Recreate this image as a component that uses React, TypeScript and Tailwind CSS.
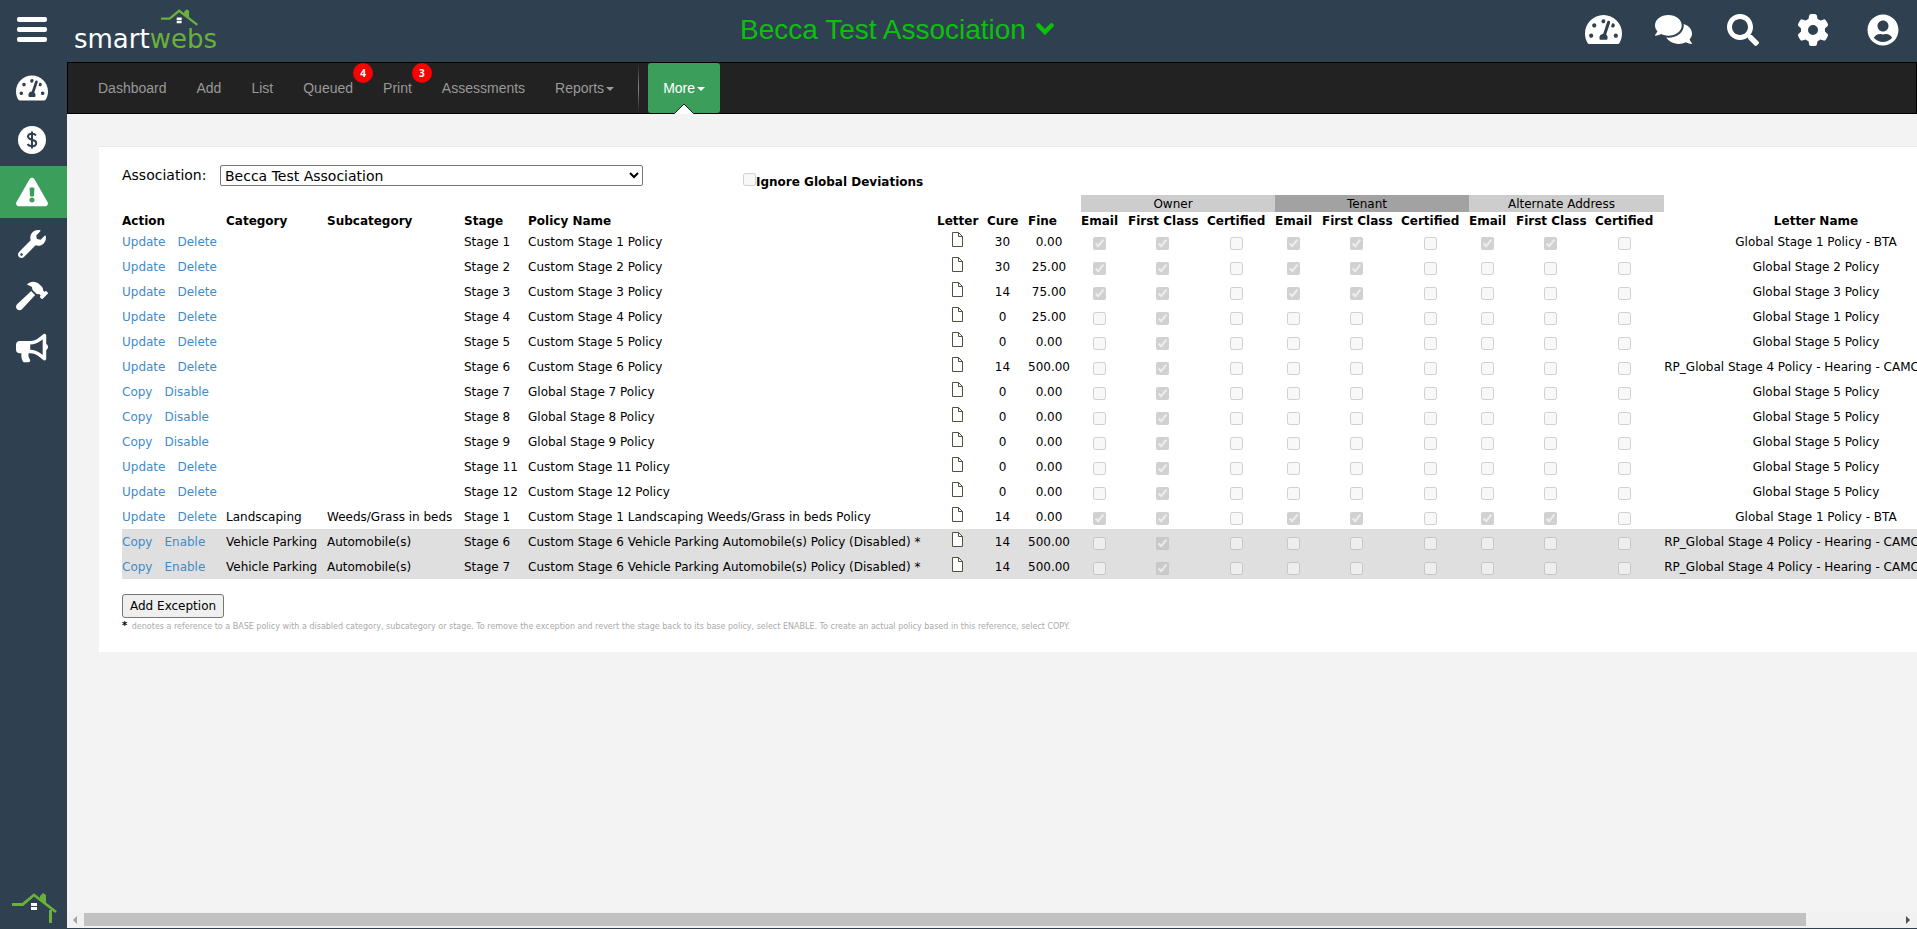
import { ReactNode } from "react"
import {
  FaBullhorn,
  FaComments,
  FaExclamationTriangle,
  FaHammer,
  FaSearch,
  FaTachometerAlt,
  FaUserCircle,
  FaWrench,
} from "react-icons/fa"
import { FaGear } from "react-icons/fa6"

type Policy = {
  category?: string
  subcategory?: string
  stage: number
  name: string
  cure: number
  fine: string
  // Email, First Class, Certified for owner, tenant and alternate address
  sends: string
  letter: string
  source: "custom" | "global" | "disabled"
}

const HEARING = "RP_Global Stage 4 Policy - Hearing - CAMCO Letter"

const policies: Policy[] = [
  { stage: 1, name: "Custom Stage 1 Policy", cure: 30, fine: "0.00", sends: "110110110", letter: "Global Stage 1 Policy - BTA", source: "custom" },
  { stage: 2, name: "Custom Stage 2 Policy", cure: 30, fine: "25.00", sends: "110110000", letter: "Global Stage 2 Policy", source: "custom" },
  { stage: 3, name: "Custom Stage 3 Policy", cure: 14, fine: "75.00", sends: "110110000", letter: "Global Stage 3 Policy", source: "custom" },
  { stage: 4, name: "Custom Stage 4 Policy", cure: 0, fine: "25.00", sends: "010000000", letter: "Global Stage 1 Policy", source: "custom" },
  { stage: 5, name: "Custom Stage 5 Policy", cure: 0, fine: "0.00", sends: "010000000", letter: "Global Stage 5 Policy", source: "custom" },
  { stage: 6, name: "Custom Stage 6 Policy", cure: 14, fine: "500.00", sends: "010000000", letter: HEARING, source: "custom" },
  { stage: 7, name: "Global Stage 7 Policy", cure: 0, fine: "0.00", sends: "010000000", letter: "Global Stage 5 Policy", source: "global" },
  { stage: 8, name: "Global Stage 8 Policy", cure: 0, fine: "0.00", sends: "010000000", letter: "Global Stage 5 Policy", source: "global" },
  { stage: 9, name: "Global Stage 9 Policy", cure: 0, fine: "0.00", sends: "010000000", letter: "Global Stage 5 Policy", source: "global" },
  { stage: 11, name: "Custom Stage 11 Policy", cure: 0, fine: "0.00", sends: "010000000", letter: "Global Stage 5 Policy", source: "custom" },
  { stage: 12, name: "Custom Stage 12 Policy", cure: 0, fine: "0.00", sends: "010000000", letter: "Global Stage 5 Policy", source: "custom" },
  { category: "Landscaping", subcategory: "Weeds/Grass in beds", stage: 1, name: "Custom Stage 1 Landscaping Weeds/Grass in beds Policy", cure: 14, fine: "0.00", sends: "110110110", letter: "Global Stage 1 Policy - BTA", source: "custom" },
  { category: "Vehicle Parking", subcategory: "Automobile(s)", stage: 6, name: "Custom Stage 6 Vehicle Parking Automobile(s) Policy (Disabled) *", cure: 14, fine: "500.00", sends: "010000000", letter: HEARING, source: "disabled" },
  { category: "Vehicle Parking", subcategory: "Automobile(s)", stage: 7, name: "Custom Stage 6 Vehicle Parking Automobile(s) Policy (Disabled) *", cure: 14, fine: "500.00", sends: "010000000", letter: HEARING, source: "disabled" },
]

const actions = {
  custom: ["Update", "Delete"],
  global: ["Copy", "Disable"],
  disabled: ["Copy", "Enable"],
}

const groups = ["Owner", "Tenant", "Alternate Address"]
const methods = ["Email", "First Class", "Certified"]

function House({ className, post }: { className: string; post?: boolean }) {
  return (
    <svg viewBox="0 0 46 31" className={className} aria-hidden="true">
      <path d="M0 11.500h10.500L22 2l22 17" fill="none" stroke="#69b03c" strokeWidth="2.8" />
      <path d="M28 6V3l3-3 3 2v10z" fill="#69b03c" />
      {post && <path d="M37 17h3v13h-3z" fill="#69b03c" />}
      <path d="M19 10h6v3h-6zM19 14h6v3h-6z" fill="#fff" />
    </svg>
  )
}

function MenuBars() {
  return (
    <svg viewBox="0 0 30 25" className="h-[25px] w-[30px]" fill="#fff" aria-hidden="true">
      <rect width="30" height="5" rx="2" />
      <rect y="10" width="30" height="5" rx="2" />
      <rect y="20" width="30" height="5" rx="2" />
    </svg>
  )
}

function DollarCircle() {
  return (
    <svg viewBox="0 0 28 28" className="size-7" aria-hidden="true">
      <circle cx="14" cy="14" r="14" fill="#fff" />
      <path
        d="M18 9.500c-.8-1.200-2.200-1.800-4-1.800-2.300 0-4 1-4 2.900 0 4.300 8.200 2 8.200 6.300 0 2-1.800 3.200-4.200 3.200-2 0-3.600-.8-4.400-2.200M14 5.500v17"
        fill="none"
        stroke="#2f4050"
        strokeWidth="2"
      />
    </svg>
  )
}

function PageIcon() {
  return (
    <svg viewBox="0 0 11 15" className="h-[15px] w-[11px]" aria-hidden="true">
      <path d="M.5.500h6l4 4v10H.500z" fill="#fff" stroke="#55503f" />
      <path d="M6.500.500v4h4" fill="none" stroke="#55503f" />
    </svg>
  )
}

function Check({ checked, label }: { checked: boolean; label: string }) {
  return <input type="checkbox" disabled defaultChecked={checked} aria-label={label} className="block size-[13px]" />
}

function HeaderButton({ label, children }: { label: string; children: ReactNode }) {
  return (
    <button aria-label={label} className="flex w-[38px] justify-center">
      {children}
    </button>
  )
}

function SideLink({ label, active, children }: { label: string; active?: boolean; children: ReactNode }) {
  return (
    <a
      href="#"
      aria-label={label}
      className={active ? "flex h-[52px] items-center justify-center bg-[#3b9f5b] pr-[3px]" : "flex h-[52px] items-center justify-center pr-[3px]"}
    >
      {children}
    </a>
  )
}

function NavItem({ label, count, caret }: { label: string; count?: number; caret?: boolean }) {
  return (
    <li className="relative">
      <a href="#" className="flex h-[50px] items-center px-[15px]">
        {label}
        {caret && <Caret />}
      </a>
      {count && (
        <span className="absolute -right-[5px] top-0 flex size-5 items-center justify-center rounded-full bg-[#ff0000] font-['Open_Sans',sans-serif] text-[10px] font-bold text-white">
          {count}
        </span>
      )}
    </li>
  )
}

function Caret() {
  return <span className="ml-[2px] mt-[2px] border-x-4 border-t-4 border-x-transparent border-t-current" />
}

export default function App() {
  return (
    <div className="flex h-screen flex-col overflow-hidden bg-[#f3f3f3] font-['DejaVu_Sans',Verdana,sans-serif] text-xs text-black">
      <header className="flex h-[62px] shrink-0 items-center bg-[#2f4050] pb-[3px] text-white">
        <div className="flex flex-1 items-center">
          <button aria-label="Menu" className="flex w-16 shrink-0 justify-center">
            <MenuBars />
          </button>
          <a href="#" aria-label="smartwebs" className="relative ml-[10px] mt-[18px] text-[26px] leading-8">
            smart<span className="text-[#69b03c]">webs</span>
            <House className="absolute -top-[14px] left-[87px] h-[26px] w-[38px]" />
          </a>
        </div>
        <button className="mr-[108px] flex items-center gap-[10px] font-['Liberation_Sans',Arial,sans-serif] text-[28px] text-[#0bc00b]">
          Becca Test Association
          <svg viewBox="0 0 18 12" className="h-3 w-[18px]" aria-hidden="true">
            <path d="M2.500 2.500 9 9l6.500-6.500" fill="none" stroke="currentColor" strokeWidth="4.500" strokeLinecap="round" />
          </svg>
        </button>
        <div className="flex flex-1 items-center justify-end gap-8 pr-[15px]">
          <HeaderButton label="Dashboard"><FaTachometerAlt className="size-[37px]" /></HeaderButton>
          <HeaderButton label="Messages"><FaComments className="size-[37px]" /></HeaderButton>
          <HeaderButton label="Search"><FaSearch className="size-8" /></HeaderButton>
          <HeaderButton label="Settings"><FaGear className="size-8" /></HeaderButton>
          <HeaderButton label="Account"><FaUserCircle className="size-8" /></HeaderButton>
        </div>
      </header>

      <div className="flex min-h-0 flex-1">
        <aside className="flex w-[67px] shrink-0 flex-col bg-[#2f4050] text-white">
          <SideLink label="Dashboard"><FaTachometerAlt className="size-8" /></SideLink>
          <SideLink label="Accounting"><DollarCircle /></SideLink>
          <SideLink label="Violations" active><FaExclamationTriangle className="size-8" /></SideLink>
          <SideLink label="Maintenance"><FaWrench className="size-7" /></SideLink>
          <SideLink label="Projects"><FaHammer className="size-8" /></SideLink>
          <SideLink label="Announcements"><FaBullhorn className="size-8" /></SideLink>
          <a href="#" aria-label="Home" className="mt-auto ml-3 mb-[5px]">
            <House post className="block h-[31px] w-[46px]" />
          </a>
        </aside>

        <div className="flex min-w-0 flex-1 flex-col">
          <nav className="h-[52px] shrink-0 border border-black bg-[#222] font-['Liberation_Sans',Arial,sans-serif] text-sm text-[#999]">
            <ul className="flex pl-[15px]">
              <NavItem label="Dashboard" />
              <NavItem label="Add" />
              <NavItem label="List" />
              <NavItem label="Queued" count={4} />
              <NavItem label="Print" count={3} />
              <NavItem label="Assessments" />
              <NavItem label="Reports" caret />
              <li aria-hidden="true" className="mx-[9px] w-px bg-linear-to-b from-[#222] via-[#888] to-[#222]" />
              <li className="relative rounded-[3px] bg-[#3b9f5b] text-white">
                <a href="#" className="flex h-[50px] items-center px-[15px]">
                  More
                  <Caret />
                </a>
                <svg viewBox="0 0 20 11" className="absolute -bottom-px left-[26px] h-[11px] w-5" aria-hidden="true">
                  <path d="M0 11 10 1l10 10z" fill="#fff" />
                  <path d="M0 11 10 1l10 10" fill="none" stroke="#222" />
                </svg>
              </li>
            </ul>
          </nav>

          <main className="min-h-0 flex-1 overflow-hidden pl-8 pt-8">
            <section className="w-max border-t border-[#e7eaec] bg-white px-[23px] pb-[17px] pt-[18px]">
              <div className="flex h-[30px] items-start text-sm">
                <label htmlFor="association" className="w-[98px] leading-5">Association:</label>
                <select id="association" className="h-[21px] w-[423px] rounded-xs border border-[#767676] bg-white">
                  <option>Becca Test Association</option>
                </select>
                <label className="ml-[100px] mt-2 flex text-xs font-bold leading-[18px]">
                  <input type="checkbox" disabled className="size-[13px]" />
                  Ignore Global Deviations
                </label>
              </div>

              <table className="border-collapse whitespace-nowrap">
                <colgroup>
                  <col className="w-[104px]" />
                  <col className="w-[101px]" />
                  <col className="w-[137px]" />
                  <col className="w-16" />
                  <col className="w-[409px]" />
                  <col className="w-[50px]" />
                  <col className="w-[41px]" />
                  <col className="w-[53px]" />
                  {groups.map((g) => [
                    <col key={g + 0} className="w-[47px]" />,
                    <col key={g + 1} className="w-[79px]" />,
                    <col key={g + 2} className={g === "Alternate Address" ? "w-[69px]" : "w-[68px]"} />,
                  ])}
                  <col className="w-[304px]" />
                </colgroup>
                <thead>
                  <tr className="h-[17px] leading-4">
                    <td colSpan={8} />
                    {groups.map((g) => (
                      <th
                        key={g}
                        colSpan={3}
                        scope="colgroup"
                        className={g === "Tenant" ? "bg-[#a2a2a2] py-0 pl-0 pr-[10px] font-normal" : "bg-[#cdcdcd] py-0 pl-0 pr-[10px] font-normal"}
                      >
                        {g}
                      </th>
                    ))}
                    <td />
                  </tr>
                  <tr className="h-[17px] text-left leading-4">
                    {["Action", "Category", "Subcategory", "Stage", "Policy Name", "Letter", "Cure", "Fine"].map((h) => (
                      <th key={h} scope="col" className="p-0">{h}</th>
                    ))}
                    {groups.map((g) => methods.map((m) => <th key={g + m} scope="col" className="p-0">{m}</th>))}
                    <th scope="col" className="p-0 text-center">Letter Name</th>
                  </tr>
                </thead>
                <tbody>
                  {policies.map((p, i) => (
                    <tr key={i} className={p.source === "disabled" ? "h-[25px] bg-[#dfdfdf]" : "h-[25px]"}>
                      <td className="p-0 pt-px align-top leading-6 text-[#428bca]">
                        <a href="#" className="mr-3">{actions[p.source][0]}</a>
                        <a href="#">{actions[p.source][1]}</a>
                      </td>
                      <td className="p-0 pt-px align-top leading-6">{p.category}</td>
                      <td className="p-0 pt-px align-top leading-6">{p.subcategory}</td>
                      <td className="p-0 pt-px align-top leading-6">Stage {p.stage}</td>
                      <td className="p-0 pt-px align-top leading-6">{p.name}</td>
                      <td className="pb-0 pl-[15px] pr-0 pt-[3px] align-top"><PageIcon /></td>
                      <td className="pb-0 pl-0 pr-[10px] pt-px text-center align-top leading-6">{p.cure}</td>
                      <td className="pb-0 pl-0 pr-[11px] pt-px text-center align-top leading-6">{p.fine}</td>
                      {[...p.sends].map((s, n) => (
                        <td key={n} className={["pb-0 pl-3 pr-0 pt-2 align-top", "pb-0 pl-7 pr-0 pt-2 align-top", "pb-0 pl-[23px] pr-0 pt-2 align-top"][n % 3]}>
                          <Check checked={s === "1"} label={`${groups[Math.floor(n / 3)]} ${methods[n % 3]}`} />
                        </td>
                      ))}
                      <td className="p-0 pt-px text-center align-top leading-6">{p.letter}</td>
                    </tr>
                  ))}
                </tbody>
              </table>

              <button className="mt-[15px] block h-6 rounded-[3px] border border-[#767676] bg-[#efefef] px-[7px]">Add Exception</button>
              <p className="text-[8px] leading-4 text-[#aaa]">
                <span className="mr-[2px] text-[10px] font-bold text-black">*</span> denotes a reference to a BASE policy with a disabled category,
                subcategory or stage. To remove the exception and revert the stage back to its base policy, select ENABLE. To create an actual policy
                based in this reference, select COPY.
              </p>
            </section>
          </main>

          <div className="flex h-[18px] shrink-0 items-center border-b border-[#2f4050] bg-[#f1f1f1] pl-[6px] pr-[7px]" aria-hidden="true">
            <span className="mr-[7px] border-y-4 border-r-4 border-y-transparent border-r-[#a3a3a3]" />
            <span className="h-[13px] w-15/16 bg-[#c1c1c1]" />
            <span className="ml-auto border-y-4 border-l-4 border-y-transparent border-l-[#505050]" />
          </div>
        </div>
      </div>
    </div>
  )
}
